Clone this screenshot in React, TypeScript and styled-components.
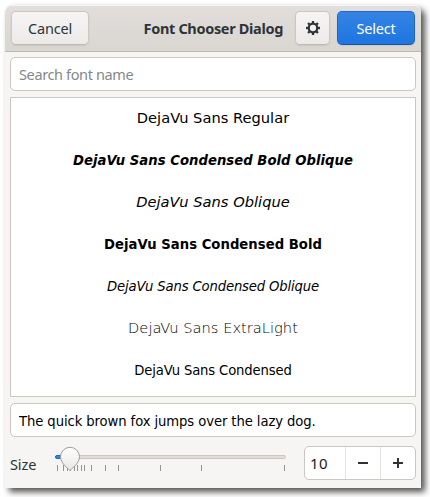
import React from 'react';
import styled, { createGlobalStyle } from 'styled-components';

const GlobalStyle = createGlobalStyle`
  * { box-sizing: border-box; }
  body { margin: 0; background: #fff; overflow: hidden; }
`;

const Desktop = styled.div`
  width: 430px;
  height: 497px;
  padding: 5px 9px 9px 5px;
  background: #fff;
  overflow: hidden;
`;

const Dialog = styled.main`
  display: flex;
  flex-direction: column;
  width: 416px;
  height: 483px;
  border-radius: 7px 7px 0 0;
  background: #f6f5f4;
  box-shadow: 4px 4px 6px rgba(0, 0, 0, 0.68);
  color: #2e3436;
  font-family: 'Noto Sans', sans-serif;
  font-size: 14.5px;
`;

const HeaderBar = styled.header`
  display: flex;
  align-items: center;
  height: 47px;
  padding: 0 6px;
  border-bottom: 1px solid #bfb8b1;
  border-radius: 7px 7px 0 0;
  background: linear-gradient(to bottom, #e1dedb, #dad6d2);
  box-shadow: inset 0 1px #f5f4f2;
`;

const Button = styled.button<{ $width: number; $primary?: boolean }>`
  display: flex;
  align-items: center;
  justify-content: center;
  width: ${(p) => p.$width}px;
  height: 34px;
  padding: 0 0 1px;
  border: 1px solid ${(p) => (p.$primary ? '#1b6acb' : '#cdc7c2')};
  border-bottom-color: ${(p) => (p.$primary ? '#15539e' : '#bfb8b1')};
  border-radius: 5px;
  background: ${(p) =>
    p.$primary
      ? 'linear-gradient(to top, #1f76e1 2px, #3584e4)'
      : 'linear-gradient(to top, #edebe9 2px, #f6f5f3)'};
  box-shadow: 0 1px 2px rgba(0, 0, 0, 0.08);
  color: ${(p) => (p.$primary ? '#fff' : '#2e3436')};
  font: inherit;
  letter-spacing: -0.2px;
`;

const Title = styled.h1`
  margin: 0 12px 0 auto;
  font-size: 14.5px;
  font-weight: 700;
  letter-spacing: -0.33px;
  line-height: 20px;
  white-space: nowrap;
`;

const Actions = styled.div`
  display: flex;
  gap: 7px;
`;

const Content = styled.section`
  display: flex;
  flex-direction: column;
  gap: 6px;
  padding: 5px;
`;

const Entry = styled.input<{ $preview?: boolean }>`
  width: 406px;
  height: 34px;
  padding: ${(p) => (p.$preview ? '0 8px' : '0 8px 1px')};
  border: 1px solid #cdc7c2;
  border-radius: 5px;
  outline: none;
  background: #fff;
  color: #000;
  font: ${(p) =>
    p.$preview
      ? "condensed 14.67px 'DejaVu Sans Condensed', 'DejaVu Sans', sans-serif"
      : "14.5px 'Noto Sans', sans-serif"};
  letter-spacing: ${(p) => (p.$preview ? '-0.09px' : '-0.37px')};
  &::placeholder { color: #85888a; opacity: 1; }
`;

const FontList = styled.ul`
  height: 300px;
  margin: 0;
  padding: 0;
  border: 1px solid #cdc7c2;
  background: #fff;
  list-style: none;
  overflow: hidden;
`;

type Face = { name: string; bold?: boolean; oblique?: boolean; condensed?: boolean; light?: boolean };

const FontRow = styled.li<{ $face: Face }>`
  display: flex;
  align-items: center;
  justify-content: center;
  height: 42px;
  padding-bottom: 3px;
  color: #000;
  font-family: ${(p) =>
    p.$face.condensed
      ? "'DejaVu Sans Condensed', 'DejaVu Sans'"
      : p.$face.light
        ? "'DejaVu Sans Light', 'DejaVu Sans'"
        : "'DejaVu Sans'"}, sans-serif;
  font-size: 14.67px;
  font-stretch: ${(p) => (p.$face.condensed ? 'condensed' : 'normal')};
  font-weight: ${(p) => (p.$face.bold ? 700 : p.$face.light ? 200 : 400)};
  font-style: ${(p) => (p.$face.oblique ? 'oblique' : 'normal')};
  letter-spacing: ${(p) => (!p.$face.condensed ? 0 : p.$face.bold ? '0.04px' : '-0.14px')};
  white-space: nowrap;
`;

const SizeBar = styled.footer`
  display: flex;
  height: 40px;
  padding-top: 3px;
`;

const SizeLabel = styled.label`
  width: 45px;
  line-height: 36px;
  letter-spacing: -0.1px;
`;

const Slider = styled.svg`
  display: block;
  width: 231px;
  height: 34px;
  margin-right: 18px;
`;

const SpinButton = styled.div`
  display: grid;
  grid-template-columns: 40px 35px 35px;
  width: 112px;
  height: 34px;
  border: 1px solid #cdc7c2;
  border-radius: 5px;
  background: #fff;
`;

const SpinValue = styled.span`
  padding-left: 5px;
  color: #1a1c1d;
  font-size: 15px;
  letter-spacing: 0.4px;
  line-height: 32px;
`;

const SpinStep = styled.button`
  display: flex;
  align-items: center;
  justify-content: center;
  padding: 0;
  border: 0;
  border-left: 1px solid #e6e3e0;
  background: transparent;
`;

const faces: Face[] = [
  { name: 'DejaVu Sans Regular' },
  { name: 'DejaVu Sans Condensed Bold Oblique', bold: true, oblique: true, condensed: true },
  { name: 'DejaVu Sans Oblique', oblique: true },
  { name: 'DejaVu Sans Condensed Bold', bold: true, condensed: true },
  { name: 'DejaVu Sans Condensed Oblique', oblique: true, condensed: true },
  { name: 'DejaVu Sans ExtraLight', light: true },
  { name: 'DejaVu Sans Condensed', condensed: true },
];

const ticks = [2, 8, 12, 15, 19, 22, 26, 29, 36, 50, 63, 105, 146, 229];

const GearIcon = () => (
  <svg width="14" height="14" viewBox="-7 -7 14 14" fill="none" stroke="#2e3436">
    <circle r="4.3" strokeWidth="2.3" />
    {[0, 45, 90, 135, 180, 225, 270, 315].map((a) => (
      <path key={a} d="M0-4.6V-7" strokeWidth="2.3" transform={`rotate(${a})`} />
    ))}
  </svg>
);

const SizeSlider = () => (
  <Slider viewBox="0 0 231 34">
    <defs>
      <linearGradient id="knob" x1="0" y1="0" x2="0" y2="1">
        <stop offset="0" stopColor="#fff" />
        <stop offset="1" stopColor="#e8e6e3" />
      </linearGradient>
    </defs>
    <rect x="0.5" y="9.5" width="230" height="3" rx="1.5" fill="#e1dedb" stroke="#cdc7c2" />
    <path d="M16 9.5H2a1.5 1.5 0 0 0 0 3H16z" fill="#3584e4" stroke="#1b6acb" />
    {ticks.map((x) => (
      <path key={x} d={`M${x + 0.5} 19v6`} stroke="#929595" />
    ))}
    <path
      d="M15 24.5C12.5 22 5.5 17 5.5 10.8a9.5 9.5 0 0 1 19 0C24.5 17 17.5 22 15 24.5z"
      fill="url(#knob)"
      stroke="#a19e9b"
    />
  </Slider>
);

export default function App() {
  return (
    <>
      <GlobalStyle />
      <Desktop>
        <Dialog>
          <HeaderBar>
            <Button $width={78}>Cancel</Button>
            <Title>Font Chooser Dialog</Title>
            <Actions>
              <Button $width={35} aria-label="Filter">
                <GearIcon />
              </Button>
              <Button $width={78} $primary>Select</Button>
            </Actions>
          </HeaderBar>
          <Content>
            <Entry placeholder="Search font name" />
            <FontList>
              {faces.map((face) => (
                <FontRow key={face.name} $face={face}>{face.name}</FontRow>
              ))}
            </FontList>
            <Entry $preview defaultValue="The quick brown fox jumps over the lazy dog." />
            <SizeBar>
              <SizeLabel>Size</SizeLabel>
              <SizeSlider />
              <SpinButton>
                <SpinValue>10</SpinValue>
                <SpinStep aria-label="Decrease">
                  <svg width="12" height="12"><path d="M1 6h10" stroke="#2e3436" strokeWidth="2" /></svg>
                </SpinStep>
                <SpinStep aria-label="Increase">
                  <svg width="12" height="12"><path d="M1 6h10M6 1v10" stroke="#2e3436" strokeWidth="2" /></svg>
                </SpinStep>
              </SpinButton>
            </SizeBar>
          </Content>
        </Dialog>
      </Desktop>
    </>
  );
}
